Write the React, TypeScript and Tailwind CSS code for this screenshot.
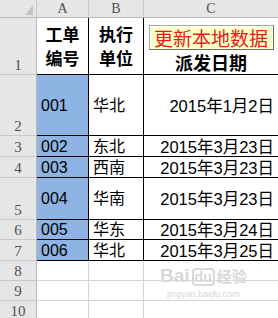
import React from 'react'

const rows = [
    { n: 2, h: 'h-[61px]', id: '001', unit: '华北', date: '2015年1月2日' },
    { n: 3, h: 'h-[21px]', id: '002', unit: '东北', date: '2015年3月23日' },
    { n: 4, h: 'h-[21px]', id: '003', unit: '西南', date: '2015年3月23日' },
    { n: 5, h: 'h-[42px]', id: '004', unit: '华南', date: '2015年3月23日' },
    { n: 6, h: 'h-[20px]', id: '005', unit: '华东', date: '2015年3月24日' },
    { n: 7, h: 'h-[21px]', id: '006', unit: '华北', date: '2015年3月25日' },
]

const emptyRows = [8, 9, 10]

const RowHead = ({ n }: { n: number }) => (
    <div className="w-[37px] shrink-0 bg-[#e6e6e6] border-r border-b border-r-[#b8b8b8] border-b-[#c8c8c8] flex items-end justify-center pb-[1px] text-[15px] leading-[16px] text-[#505050] font-['Liberation_Serif',serif]">
        {n}
    </div>
)

const App = () => {
    return (
        <div className="relative w-[278px] h-[318px] overflow-hidden bg-white text-black font-['Liberation_Sans','Noto_Sans_CJK_SC',sans-serif]">
            {/* column headers */}
            <div className="flex h-[18px] bg-[#e6e6e6] border-b border-[#b8b8b8] text-[14px] leading-[16px] text-[#505050] font-['Liberation_Serif',serif]">
                <div className="w-[37px] shrink-0 border-r border-[#c8c8c8] flex items-end justify-end pr-[3px] pb-[2px]">
                    <svg width="8" height="10" viewBox="0 0 8 10">
                        <polygon points="8,0 8,10 0,10" fill="#c4c4c4" />
                    </svg>
                </div>
                <div className="w-[52px] shrink-0 border-r border-[#c8c8c8] text-center pt-[1px]">A</div>
                <div className="w-[55px] shrink-0 border-r border-[#c8c8c8] text-center pt-[1px]">B</div>
                <div className="flex-1 text-center pt-[1px]">C</div>
            </div>

            {/* row 1: titles */}
            <div className="flex h-[57px]">
                <RowHead n={1} />
                <div className="w-[52px] shrink-0 border-r border-b border-black flex flex-col items-center justify-center font-bold text-[17px] leading-[24px] font-['Noto_Sans_CJK_SC',sans-serif]">
                    <span>工单</span>
                    <span>编号</span>
                </div>
                <div className="w-[55px] shrink-0 border-r border-b border-black flex flex-col items-center justify-center font-bold text-[17px] leading-[24px] font-['Noto_Sans_CJK_SC',sans-serif]">
                    <span>执行</span>
                    <span>单位</span>
                </div>
                <div className="flex-1 border-b border-black flex flex-col items-center pt-[7px]">
                    <button className="w-[125px] h-[25px] bg-[#ffffc8] border border-[#a8a8a8] border-r-[#6c6c6c] border-b-[#6c6c6c] shadow-[inset_1px_1px_0_#ffffff] text-[#e0201c] text-[19px] leading-[22px] font-['Noto_Sans_CJK_SC',sans-serif]">
                        更新本地数据
                    </button>
                    <div className="mt-[2px] font-bold text-[18px] leading-[20px] font-['Noto_Sans_CJK_SC',sans-serif]">派发日期</div>
                </div>
            </div>

            {/* data rows */}
            {rows.map(row => (
                <div key={row.n} className={`flex ${row.h}`}>
                    <RowHead n={row.n} />
                    <div className="w-[52px] shrink-0 bg-[#8db4e2] border-r border-b border-black flex items-center pl-[4px] pt-[1px] text-[16px] leading-[18px]">
                        {row.id}
                    </div>
                    <div className="w-[55px] shrink-0 border-r border-b border-black flex items-center pl-[4px] pt-[1px] text-[16px] leading-[18px]">
                        {row.unit}
                    </div>
                    <div className="flex-1 border-b border-black flex items-center justify-end pr-[4px] pt-[1px] text-[16.5px] leading-[18px] whitespace-nowrap">
                        {row.date}
                    </div>
                </div>
            ))}

            {/* empty rows */}
            {emptyRows.map(n => (
                <div key={n} className="flex h-[20px]">
                    <RowHead n={n} />
                    <div className="w-[52px] shrink-0 border-r border-b border-[#d4d4d4]" />
                    <div className="w-[55px] shrink-0 border-r border-b border-[#d4d4d4]" />
                    <div className="flex-1 border-b border-[#d4d4d4]" />
                </div>
            ))}

            {/* baidu watermark */}
            <div className="absolute left-[160px] top-[266px] flex flex-col items-center text-[#d8d8d8] pointer-events-none">
                <div className="flex items-end gap-[2px] text-[19px] leading-[20px] font-bold">
                    <span>Bai</span>
                    <span className="border-2 border-[#d8d8d8] rounded-[4px] px-[1px] text-[14px] leading-[14px]">du</span>
                    <span className="text-[15px] font-['Noto_Sans_CJK_SC',sans-serif]">经验</span>
                </div>
                <div className="text-[9px] leading-[12px] mt-[2px]">jingyan.baidu.com</div>
            </div>
        </div>
    )
}

export default App
